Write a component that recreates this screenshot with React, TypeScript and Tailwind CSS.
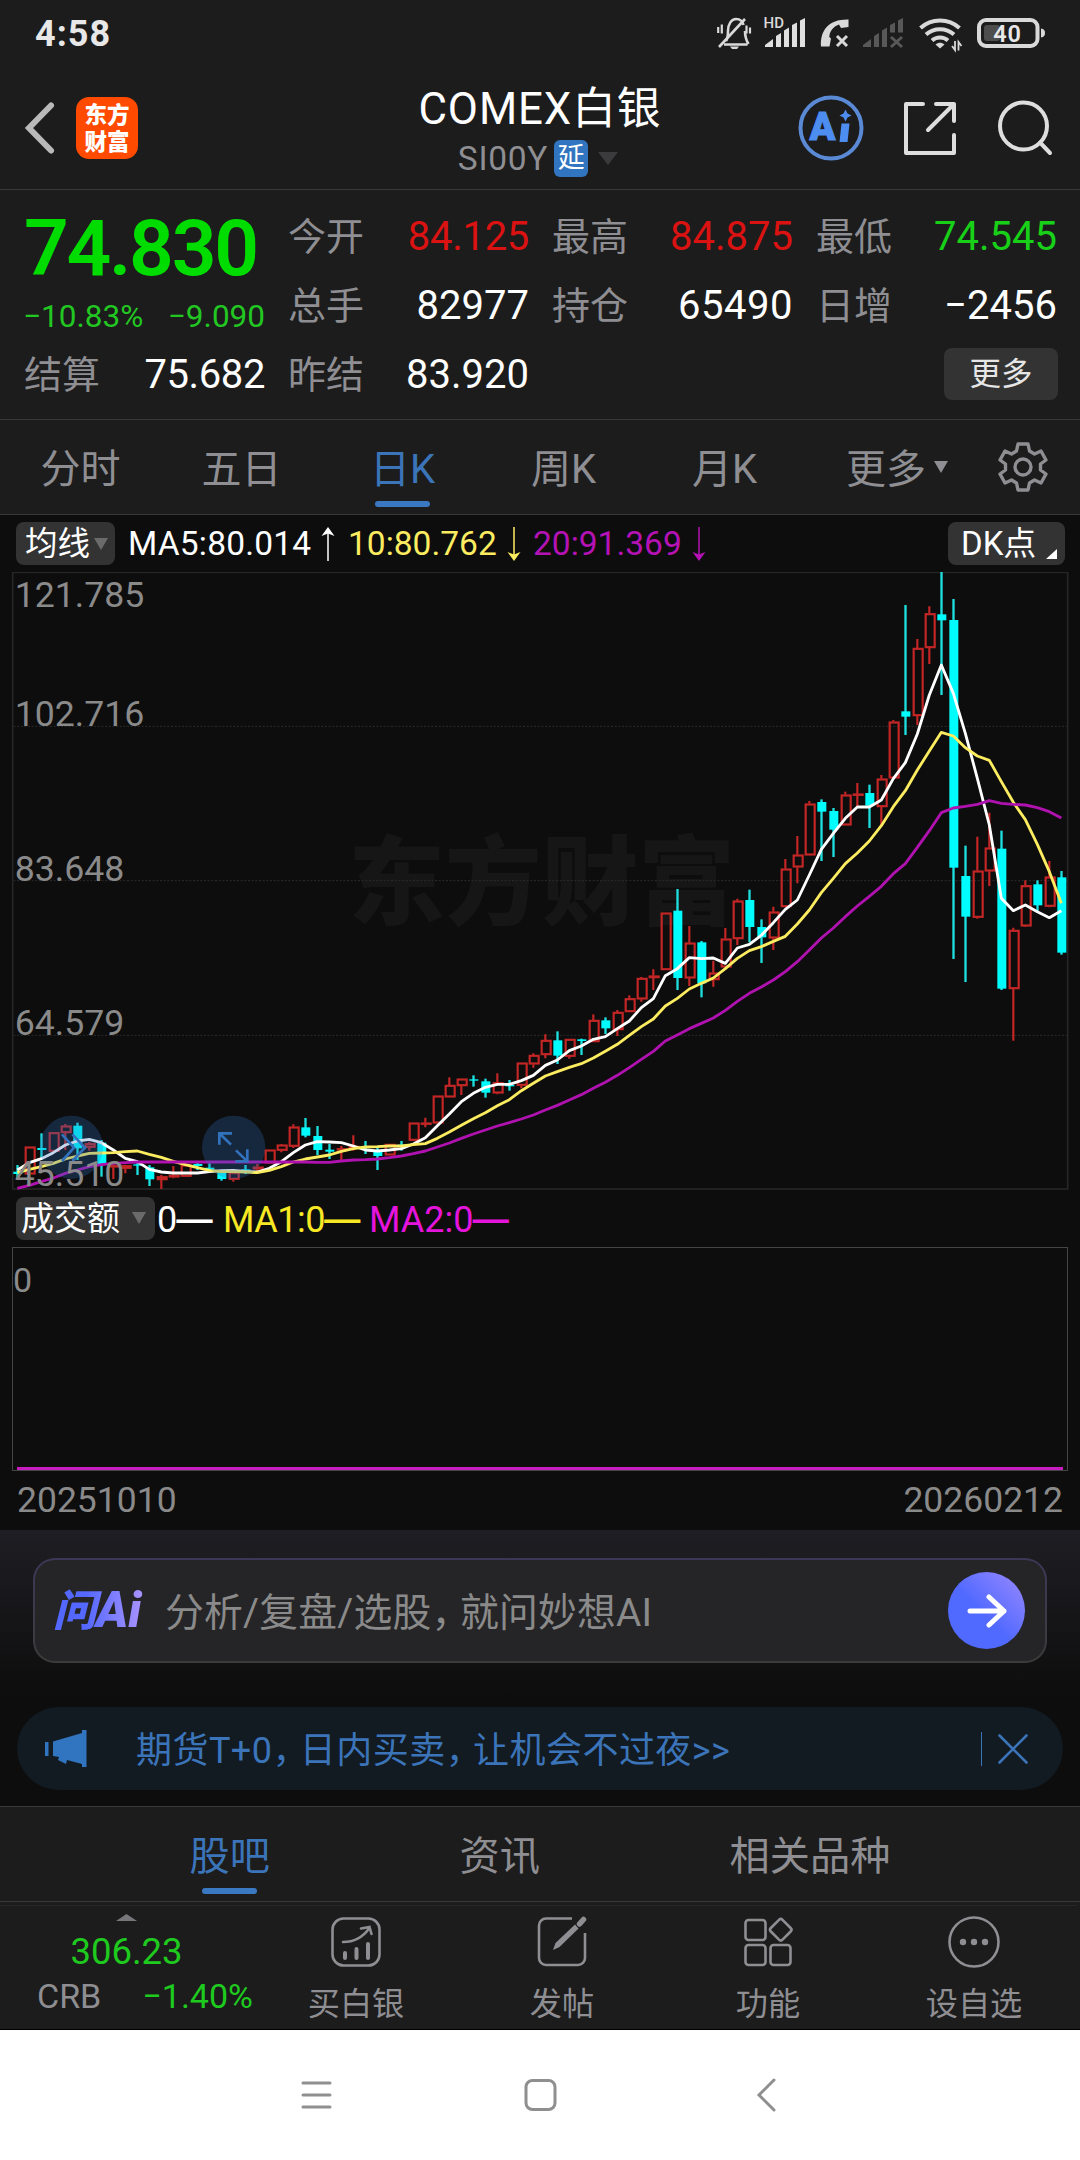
import React, { useState } from "react";

type Candle = [string, number, number, number, number];

// [direction, high, body top, body bottom, low], measured down from the top of the plot
const candles: Candle[] = [
  ["d", 1779, 1799, 1806, 1819],
  ["u", 1724, 1724, 1807, 1807],
  ["d", 1684, 1728, 1734, 1764],
  ["u", 1681, 1681, 1739, 1739],
  ["u", 1656, 1661, 1683, 1734],
  ["d", 1652, 1661, 1729, 1764],
  ["u", 1709, 1714, 1727, 1736],
  ["d", 1704, 1712, 1776, 1814],
  ["u", 1776, 1780, 1786, 1821],
  ["u", 1778, 1780, 1790, 1804],
  ["d", 1769, 1777, 1781, 1809],
  ["d", 1779, 1786, 1822, 1842],
  ["u", 1809, 1813, 1824, 1851],
  ["u", 1782, 1809, 1816, 1819],
  ["u", 1778, 1778, 1814, 1814],
  ["d", 1772, 1776, 1782, 1794],
  ["d", 1774, 1787, 1794, 1799],
  ["d", 1797, 1801, 1821, 1826],
  ["u", 1801, 1801, 1823, 1829],
  ["d", 1779, 1792, 1796, 1806],
  ["u", 1776, 1784, 1792, 1799],
  ["u", 1733, 1733, 1774, 1774],
  ["u", 1716, 1718, 1736, 1741],
  ["u", 1657, 1664, 1724, 1728],
  ["d", 1638, 1666, 1691, 1696],
  ["d", 1662, 1692, 1734, 1749],
  ["d", 1716, 1733, 1739, 1761],
  ["u", 1722, 1729, 1734, 1764],
  ["u", 1690, 1722, 1726, 1736],
  ["d", 1707, 1722, 1727, 1746],
  ["d", 1724, 1734, 1752, 1794],
  ["u", 1716, 1716, 1750, 1750],
  ["d", 1707, 1718, 1724, 1736],
  ["u", 1652, 1652, 1706, 1706],
  ["u", 1637, 1652, 1656, 1666],
  ["u", 1571, 1571, 1654, 1654],
  ["u", 1516, 1539, 1576, 1576],
  ["u", 1520, 1520, 1542, 1569],
  ["d", 1510, 1522, 1526, 1544],
  ["d", 1520, 1528, 1562, 1577],
  ["u", 1504, 1531, 1564, 1567],
  ["d", 1524, 1539, 1543, 1556],
  ["u", 1472, 1472, 1541, 1549],
  ["u", 1444, 1449, 1477, 1487],
  ["u", 1387, 1404, 1449, 1459],
  ["d", 1378, 1405, 1451, 1476],
  ["u", 1401, 1401, 1454, 1460],
  ["d", 1400, 1402, 1407, 1449],
  ["u", 1327, 1344, 1410, 1410],
  ["d", 1336, 1345, 1369, 1386],
  ["u", 1314, 1320, 1374, 1392],
  ["u", 1270, 1279, 1320, 1320],
  ["u", 1215, 1218, 1282, 1289],
  ["u", 1192, 1211, 1218, 1254],
  ["u", 1022, 1022, 1194, 1194],
  ["d", 951, 1016, 1218, 1254],
  ["u", 1062, 1112, 1219, 1242],
  ["d", 1107, 1111, 1234, 1276],
  ["u", 1166, 1202, 1224, 1244],
  ["u", 1068, 1100, 1186, 1186],
  ["u", 980, 986, 1101, 1119],
  ["d", 953, 984, 1065, 1111],
  ["d", 1042, 1065, 1096, 1173],
  ["u", 1004, 1019, 1099, 1134],
  ["u", 861, 890, 1005, 1005],
  ["u", 792, 848, 886, 934],
  ["u", 687, 695, 850, 850],
  ["d", 682, 690, 719, 867],
  ["d", 708, 717, 773, 855],
  ["u", 659, 668, 760, 760],
  ["u", 633, 665, 669, 704],
  ["d", 638, 663, 701, 768],
  ["u", 609, 620, 705, 759],
  ["u", 444, 449, 619, 619],
  ["d", 99, 418, 434, 489],
  ["u", 201, 228, 432, 459],
  ["u", 103, 124, 228, 276],
  ["d", 0, 127, 145, 369],
  ["d", 81, 144, 887, 1161],
  ["d", 821, 912, 1034, 1230],
  ["u", 794, 896, 1037, 1040],
  ["u", 722, 827, 898, 942],
  ["d", 776, 830, 1250, 1254],
  ["u", 1067, 1074, 1251, 1406],
  ["u", 925, 940, 1063, 1065],
  ["d", 925, 937, 1000, 1022],
  ["u", 867, 914, 1004, 1006],
  ["d", 897, 916, 1142, 1148],
];

const ma5 = [
  1794, 1772, 1760, 1742, 1719, 1707, 1702, 1712, 1734, 1759, 1769, 1792, 1800,
  1803, 1803, 1803, 1799, 1796, 1795, 1798, 1800, 1789, 1769, 1742, 1719, 1709,
  1710, 1712, 1722, 1734, 1737, 1734, 1730, 1716, 1697, 1661, 1626, 1589, 1564,
  1546, 1537, 1537, 1526, 1510, 1480, 1464, 1436, 1422, 1402, 1394, 1370, 1347,
  1307, 1280, 1211, 1190, 1157, 1160, 1158, 1174, 1128, 1117, 1090, 1052, 1012,
  984, 909, 832, 784, 739, 705, 705, 684, 620, 572, 486, 369, 279, 364, 484,
  619, 759, 979, 1016, 999, 1019, 1037, 1016,
];

const ma10 = [
  1802, 1792, 1784, 1774, 1761, 1752, 1744, 1743, 1742, 1739, 1737, 1747, 1756,
  1768, 1778, 1787, 1795, 1799, 1799, 1800, 1802, 1795, 1784, 1770, 1761, 1755,
  1749, 1738, 1730, 1725, 1724, 1722, 1722, 1718, 1715, 1699, 1680, 1660, 1640,
  1622, 1601, 1583, 1556, 1534, 1512, 1499, 1486, 1475, 1458, 1438, 1417, 1390,
  1364, 1341, 1302, 1279, 1251, 1234, 1218, 1190, 1159, 1136, 1124, 1108, 1093,
  1056, 1014, 962, 919, 875, 843, 807, 761, 704, 656, 594, 537, 481, 492, 527,
  552, 565, 629, 691, 743, 817, 899, 994,
];

const ma20 = [
  1849, 1840, 1829, 1818, 1804, 1794, 1784, 1778, 1774, 1772, 1770, 1770, 1770,
  1770, 1770, 1770, 1770, 1770, 1770, 1770, 1770, 1770, 1770, 1770, 1770, 1771,
  1771, 1767, 1764, 1763, 1761, 1757, 1752, 1745, 1737, 1725, 1713, 1699, 1686,
  1674, 1662, 1652, 1641, 1629, 1614, 1600, 1584, 1568, 1549, 1531, 1510, 1487,
  1462, 1438, 1407, 1389, 1370, 1354, 1338, 1315, 1288, 1264, 1245, 1224, 1199,
  1169, 1134, 1098, 1068, 1034, 1002, 973, 943, 905, 875, 826, 776, 722, 708,
  703, 697, 686, 694, 697, 699, 707, 719, 738,
];

const xAt = (i: number) => 52 + i * 36;
const toPoints = (values: number[]) =>
  values.map((y, i) => `${xAt(i)},${y}`).join(" ");

const StatusBar = () => (
  <div className="flex h-[68px] items-start justify-between pl-[35px] pr-[34px]">
    <span className="mt-[16px] text-[36px] leading-none font-bold tracking-[1px] text-[#e8e8e8]">
      4:58
    </span>
    <svg width="330" height="40" viewBox="716 14 330 40" className="mt-3.5">
      {/* muted bell */}
      <g fill="none" stroke="#d9d9d9" strokeWidth="2.6">
        <path d="M724 44.5h23.5M726 41c2-3 2-6 2-10 0-7 3.500-12 8-12s7 3 7.500 6M745 31c0 6 1 9 3.500 13" />
        <path d="M719 47l26-28" />
        <path d="M718.200 27v6M721.800 24.500v9M746.500 25.500v8M750 27.500v6" strokeWidth="2.200" />
      </g>
      <path d="M730 46.500h9l-2 2.500h-5z" fill="#d9d9d9" />
      <text x="763.500" y="28" fontSize="15" fontWeight="500" fill="#d9d9d9" fontFamily="Roboto">
        HD
      </text>
      <g fill="#e0e0e0">
        <path d="M765 47v-2l8-6v8zM776 47V36l5-3v14zM784 47V30.500l5-3V47zM792 47V25l5-2.500V47zM800 47V20.500l5-2.500v29z" />
      </g>
      {/* call forwarding */}
      <path d="M821 46.500C820 30 829 19 848.500 19.500V27l-7.500 1-2-3.500c-6 2-9.500 7-9.700 12.500l1.700 1.500-1.500 8z" fill="#d9d9d9" />
      <path d="M837 36l10 10M847 36l-10 10" stroke="#d9d9d9" strokeWidth="3" />
      <g fill="#585858">
        <path d="M863 47v-2l8-6v8zM874 47V36l5-3v14zM882 47V30.500l5-3V47zM890 32.500V25l5-2.500v10zM898 32.500V20.500l5-2.500v14.500z" />
        <path d="M891 37l11 10M902 37l-11 10" stroke="#585858" strokeWidth="3" />
      </g>
      {/* wifi */}
      <g fill="none" stroke="#d9d9d9" strokeWidth="4">
        <path d="M920.500 28c11-10 28-10 39 0" />
        <path d="M926 34.500c8-7 20-7 28 0" />
        <path d="M932 40.500c4.500-4 11.500-4 16 0" />
      </g>
      <path d="M935.500 44.500c3-2.300 6-2.300 9 0l-4.500 4z" fill="#d9d9d9" />
      <path d="M955 41v9l-3-4M958.500 50.500V42l3 4" fill="none" stroke="#d9d9d9" strokeWidth="1.800" />
      {/* battery */}
      <rect x="979" y="20" width="58.500" height="26" rx="7" fill="none" stroke="#d9d9d9" strokeWidth="4" />
      <rect x="984" y="25" width="16" height="16" rx="3" fill="#4d4d4d" />
      <path d="M1041 28.500c3 .5 4 2 4 4.500s-1 4-4 4.500z" fill="#d9d9d9" />
      <text x="1007.500" y="41.500" fontSize="23.500" fontWeight="600" letterSpacing="0.800" fill="#e8e8e8" textAnchor="middle" fontFamily="Roboto">
        40
      </text>
    </svg>
  </div>
);

const Header = () => (
  <header className="flex h-[122px] border-b border-[#38383a]">
    <div className="flex w-[300px] items-start pl-6 pt-[29px]">
      <svg width="32" height="62" viewBox="0 0 32 62" fill="none">
        <path d="M27 8.500L5 31l22 22.500" stroke="#b9b9b9" strokeWidth="6" strokeLinecap="round" />
      </svg>
      <div className="ml-5 flex h-[62px] w-[62px] flex-col items-center justify-center rounded-[13px] bg-[#ff4a00] pt-px text-[22.500px] leading-[27px] font-black text-white">
        <span>东方</span>
        <span>财富</span>
      </div>
    </div>
    <div className="flex w-[480px] flex-col items-center">
      <h1 className="mt-[15px] text-[43.800px] leading-[52px] tracking-[0.900px] whitespace-nowrap text-white">
        COMEX白银
      </h1>
      <div className="mt-[5px] flex h-[37px] items-center">
        <span className="-ml-1 pt-px text-[33.500px] leading-none tracking-[0.700px] text-[#8e8e93]">
          SI00Y
        </span>
        <span className="ml-[6px] flex h-[37px] w-[34px] items-center justify-center rounded-md bg-[#3174bf] text-[27px] leading-none text-white">
          延
        </span>
        <svg width="20" height="13" viewBox="0 0 20 13" className="ml-2.5">
          <path d="M0 0h20L10 13z" fill="#3b3b3d" />
        </svg>
      </div>
    </div>
    <div className="flex w-[300px] items-start pl-[17px] pt-[26px]">
      <svg width="68" height="68" viewBox="0 0 68 68">
        <circle cx="34" cy="34" r="30.500" fill="none" stroke="#5a8ad6" strokeWidth="4" />
        <text x="12.500" y="46" fontSize="38" fontWeight="900" fill="#4d8df0" stroke="#4d8df0" strokeWidth="1" fontFamily="Roboto">
          A
        </text>
        <path d="M44.500 29.500h8l-2 18.500h-8z" fill="#4d8df0" />
        <path d="M48.500 15.500l2 4 4 2-4 2-2 4-2-4-4-2 4-2z" fill="#4d8df0" />
      </svg>
      <svg width="56" height="56" viewBox="0 0 56 56" fill="none" className="ml-[37px] mt-1.5" stroke="#dedede" strokeWidth="4" strokeLinecap="round" strokeLinejoin="round">
        <path d="M21 4H4v49h48V35M34 4h18v17M52 4L26 30" />
      </svg>
      <svg width="58" height="58" viewBox="0 0 58 58" fill="none" className="ml-[39px] mt-1.5" stroke="#dedede" strokeWidth="4" strokeLinecap="round">
        <circle cx="26.500" cy="26" r="23.500" />
        <path d="M43 42.500L53 53" />
      </svg>
    </div>
  </header>
);

const QuoteCell = ({
  label,
  value,
  color,
}: {
  label: string;
  value: string;
  color: string;
}) => (
  <div className="-mr-px flex h-[69px] items-center justify-between pt-px leading-none">
    <span className="text-[38px]">{label}</span>
    <span className={`text-[40px] ${color}`}>{value}</span>
  </div>
);

const Quote = () => (
  <section className="h-[230px] border-b border-[#38383a] px-6 pt-3 text-[#8e8e93]">
    <div className="grid grid-cols-4 gap-x-6">
      <div className="row-span-2 flex flex-col">
        <span className="mt-[6px] text-[78.500px] leading-[80px] font-semibold tracking-[-2.300px] text-[#00dc00]">
          74.830
        </span>
        <div className="-mx-px mt-3 flex justify-between text-[31.500px] leading-[34px] text-[#22c722]">
          <span>−10.83%</span>
          <span>−9.090</span>
        </div>
      </div>
      <QuoteCell label="今开" value="84.125" color="text-[#db1212] tracking-[-0.300px]" />
      <QuoteCell label="最高" value="84.875" color="text-[#db1212]" />
      <QuoteCell label="最低" value="74.545" color="text-[#18d018]" />
      <QuoteCell label="总手" value="82977" color="text-white" />
      <QuoteCell label="持仓" value="65490" color="text-white tracking-[0.500px]" />
      <QuoteCell label="日增" value="−2456" color="text-white" />
      <QuoteCell label="结算" value="75.682" color="text-white tracking-[-0.400px]" />
      <QuoteCell label="昨结" value="83.920" color="text-white" />
      <div />
      <div className="flex items-center justify-end">
        <button className="-mt-0.5 -mr-0.5 h-[52px] w-[114px] rounded-lg bg-[#333333] pt-0.5 text-[31.500px] leading-none text-[#e6e6e6]">
          更多
        </button>
      </div>
    </div>
  </section>
);

const periods = ["分时", "五日", "日K", "周K", "月K"];

const PeriodTabs = () => {
  const [active, setActive] = useState("日K");

  return (
    <nav className="flex h-[95px] border-b border-[#38383a] text-[40px] leading-none text-[#8e8e93]">
      {periods.map((period) => (
        <button
          key={period}
          onClick={() => setActive(period)}
          className={`relative w-[161px] pt-1.5 ${active === period ? "text-[#3b74b8]" : ""}`}
        >
          {period}
          {active === period && (
            <span className="absolute bottom-[7px] left-[53px] h-1.5 w-[55px] rounded-full bg-[#3b78c2]" />
          )}
        </button>
      ))}
      <button className="flex w-[161px] items-center pt-1.5 pl-[41px]">
        更多
        <svg width="14" height="12" viewBox="0 0 14 12" className="mb-1.5 ml-2">
          <path d="M0 0h14L7 12z" fill="#8e8e93" />
        </svg>
      </button>
      <div className="flex flex-1 items-center justify-center">
        <svg width="50" height="52" viewBox="0 0 50 52" fill="none" stroke="#8e8e93" strokeWidth="3.400" strokeLinejoin="round">
          <path d="M20 3h10l1.500 7 5 3 6.500-3 5 9-5.500 4v6l5.500 4-5 9-6.500-3-5 3-1.500 7H20l-1.500-7-5-3L7 42l-5-9 5.500-4v-6L2 19l5-9 6.500 3 5-3z" />
          <circle cx="25" cy="26" r="8" />
        </svg>
      </div>
    </nav>
  );
};

const MaBar = () => (
  <div className="flex h-[57px] items-center pl-4 pr-[15px] text-[33.500px] leading-none text-white">
    <button className="flex h-[43px] w-[99px] items-center rounded-lg bg-[#333333] pt-px pl-[9px] text-[32.500px]">
      均线
      <svg width="14" height="12" viewBox="0 0 14 12" className="ml-1">
        <path d="M0 0h14L7 12z" fill="#6b6b6b" />
      </svg>
    </button>
    <span className="ml-[13px] w-[193px] tracking-[0.200px]">MA5:80.014</span>
    <Arrow color="#ffffff" up />
    <span className="ml-[13px] w-[151px] text-[#fcec60]">10:80.762</span>
    <span className="w-2" />
    <Arrow color="#fcec60" />
    <span className="ml-3 w-[151px] text-[#b512b5]">20:91.369</span>
    <span className="w-2" />
    <Arrow color="#b512b5" />
    <button className="ml-auto flex h-[43px] w-[117px] items-center rounded-lg bg-[#333333] pl-[13px] text-[33px]">
      DK点
      <svg width="11" height="10" viewBox="0 0 11 10" className="ml-2.5 mt-5">
        <path d="M11 0v10H0z" fill="#fff" />
      </svg>
    </button>
  </div>
);

const Arrow = ({ color, up }: { color: string; up?: boolean }) => (
  <svg width="14" height="34" viewBox="0 0 14 34" className={up ? "" : "rotate-180"}>
    <path d="M7 2v32" stroke={color} strokeWidth="1.500" />
    <path d="M7 0l6.500 9L7 6.500.500 9z" fill={color} />
  </svg>
);

const KLineChart = () => (
  <div className="h-[617px]">
    <svg width="1080" height="619" viewBox="0 0 3240 1857">
      <rect x="38" y="1" width="3165" height="1850" fill="none" stroke="#262626" strokeWidth="5" />
      <text x="1625" y="1034" fontSize="290" fontWeight="900" fill="#161616" textAnchor="middle" fontFamily="Noto Sans CJK SC">
        东方财富
      </text>
      {[463, 926, 1390].map((y) => (
        <line key={y} x1="40" x2="3202" y1={y} y2={y} stroke="#2c2c2c" strokeWidth="3" strokeDasharray="6 5" />
      ))}
      {candles.map(([dir, high, top, bottom, low], i) => {
        const x = xAt(i);
        if (dir === "u") {
          return (
            <g key={i} stroke="#c42626" strokeWidth="6.500" fill="none">
              <path d={`M${x} ${high}V${top}M${x} ${bottom}V${low}`} />
              <rect x={x - 11} y={top + 2.5} width="27" height={Math.max(bottom - top - 5, 1)} />
            </g>
          );
        }
        return (
          <g key={i} fill="#00fcfc">
            <rect x={x - 3} y={high} width="7" height={low - high} fill="#1fdede" />
            <rect x={x - 12} y={top} width="27" height={bottom - top} />
          </g>
        );
      })}
      <g fill="none" strokeWidth="8.500" strokeLinejoin="round">
        <polyline points={toPoints(ma5)} stroke="#ffffff" />
        <polyline points={toPoints(ma10)} stroke="#fcec60" />
        <polyline points={toPoints(ma20)} stroke="#b012b0" />
      </g>
      <g fill="#2f6fc0">
        <circle cx="214" cy="1726" r="95" fillOpacity="0.28" />
        <circle cx="701" cy="1726" r="95" fillOpacity="0.28" />
      </g>
      <g fill="none" stroke="#3272bd" strokeWidth="8">
        <path d="M186 1687l36 40-36 40M217 1687l38 40-38 40" />
        <path d="M658 1718v-34h38M660 1686l33 32M742 1732v36h-36M708 1735l34 33" />
      </g>
      <g fill="#8a8a8a" fontSize="107" fontFamily="Roboto">
        <text x="44" y="104">121.785</text>
        <text x="44" y="462">102.716</text>
        <text x="44" y="927">83.648</text>
        <text x="44" y="1388">64.579</text>
        <text x="44" y="1842">45.510</text>
      </g>
    </svg>
  </div>
);

const VolumeChart = () => (
  <section>
    <div className="flex h-[58px] items-center pl-4 text-[36px] leading-none">
      <button className="flex h-[43px] w-[139px] items-center rounded-lg bg-[#333333] pl-[5px] text-[33px] text-white">
        成交额
        <svg width="14" height="12" viewBox="0 0 14 12" className="ml-3">
          <path d="M0 0h14L7 12z" fill="#6b6b6b" />
        </svg>
      </button>
      <span className="ml-[2px] flex w-[66px] items-center pt-1 text-white">
        0<Dash />
      </span>
      <span className="flex w-[146px] items-center pt-1 tracking-[-0.500px] text-[#f8e824]">
        MA1:0
        <Dash />
      </span>
      <span className="flex items-center pt-1 text-[#e414dc]">
        MA2:0
        <Dash />
      </span>
    </div>
    <div className="mx-[12px] flex h-[224px] flex-col justify-between border border-[#454545]">
      <span className="mt-[15px] text-[34px] leading-none text-[#8a8a8a]">0</span>
      <div className="mx-1 h-[3px] bg-[#c81ec0]" />
    </div>
    <div className="flex h-[59px] justify-between px-[17px] pt-3 text-[35.500px] leading-none text-[#8a8a8a]">
      <span>20251010</span>
      <span>20260212</span>
    </div>
  </section>
);

const Dash = () => (
  <span className="-mt-3 -ml-[3px] font-['Noto_Sans_CJK_SC',sans-serif] text-[45px] leading-none font-medium">
    —
  </span>
);

// full-width comma with its trailing space trimmed
const Comma = () => (
  <span className="mr-[9px] [font-feature-settings:'halt']">，</span>
);

const AskAi = () => (
  <section className="h-[177px] bg-linear-to-b from-[#1f1e24] to-[#0d0d0d] to-95% px-[33px] pt-7">
    <div className="rounded-[22px] bg-linear-to-b from-[#3b3858] to-[#3e3b3b] p-0.5">
      <div className="flex h-[101px] items-center rounded-[20px] bg-[#252527] pl-[17px] pr-5">
        <div className="flex w-[113px] items-center bg-linear-to-r from-[#5468ff] from-30% to-[#a892ff] to-80% bg-clip-text pl-px text-[43px] leading-[56px] font-black whitespace-nowrap text-transparent italic">
          问<span className="text-[49px]">Ai</span>
        </div>
        <p className="flex-1 pt-1.5 text-[38.800px] leading-none tracking-[0.200px] whitespace-nowrap text-[#8a8a8a]">
          分析/复盘/选股
          <Comma />
          就问妙想AI
        </p>
        <button className="flex h-[77px] w-[77px] items-center justify-center rounded-full bg-linear-to-tr from-[#5069ff] from-45% to-[#9a88ff]">
          <svg width="40" height="36" viewBox="0 0 40 36" fill="none" stroke="#fff" strokeWidth="5" strokeLinecap="round" strokeLinejoin="round">
            <path d="M3 18h34M22 4l15 14-15 14" />
          </svg>
        </button>
      </div>
    </div>
  </section>
);

const Banner = () => (
  <section className="h-[99px] px-[17px]">
    <div className="flex h-[83px] items-center rounded-full bg-[#121a22] text-[#3b74b8]">
      <svg width="42" height="37" viewBox="0 0 42 37" className="ml-7" fill="#3174bf">
        <path d="M0 12h3.500v14H0zM8 11.500L37 3V0h4.500v37H37v-3l-15-4-1 4-8-4 1-3-6-1z" />
      </svg>
      <p className="ml-[49px] pt-1 text-[36px] leading-none tracking-[0.450px] whitespace-nowrap">
        期货T+0
        <Comma />
        日内买卖
        <Comma />
        让机会不过夜&gt;&gt;
      </p>
      <span className="ml-auto h-[34px] w-px bg-[#3b74b8]" />
      <svg width="30" height="30" viewBox="0 0 30 30" className="ml-4 mr-[35px]" stroke="#3b74b8" strokeWidth="2.600" strokeLinecap="round">
        <path d="M1.500 1.500l27 27M28.500 1.500l-27 27" />
      </svg>
    </div>
  </section>
);

const ContentTabs = () => (
  <nav className="flex h-[96px] justify-evenly border-y border-[#38383a] text-[40.200px] leading-none text-[#8e8e93]">
    <button className="relative pt-1.5 text-[#3b74b8]">
      股吧
      <span className="absolute bottom-[7px] left-[12px] h-1.5 w-[55px] rounded-full bg-[#3b78c2]" />
    </button>
    <button className="pt-1.5">资讯</button>
    <button className="pt-1.5">相关品种</button>
  </nav>
);

const actions = [
  {
    label: "买白银",
    icon: (
      <>
        <rect x="2.500" y="2.500" width="47" height="47" rx="11" />
        <path d="M13 26c12 0 20-5 26-13.500M31 12.500l8.500-1.500 2 7" strokeLinecap="round" />
        <path d="M15 37v5M26.500 33v9M38 28v14" strokeWidth="4" strokeLinecap="round" />
      </>
    ),
  },
  {
    label: "发帖",
    icon: (
      <>
        <path d="M36 2.500H10a7 7 0 0 0-7 7V42a7 7 0 0 0 7 7h32a7 7 0 0 0 7-7V17" />
        <path d="M17 34l2.500-7L39 8.500l3.500 4L23.500 31z" fill="#8e8e93" stroke="none" />
        <path d="M43.500 8l4-4.500" strokeWidth="5.500" strokeLinecap="round" />
      </>
    ),
  },
  {
    label: "功能",
    icon: (
      <>
        <rect x="3.500" y="4" width="20" height="20" rx="3" />
        <rect x="3.500" y="29" width="20" height="20" rx="3" />
        <rect x="28.500" y="29" width="20" height="20" rx="3" />
        <rect x="30.500" y="5.500" width="16.500" height="16.500" rx="2.500" transform="rotate(45 38.750 13.750)" />
      </>
    ),
  },
  {
    label: "设自选",
    icon: (
      <>
        <circle cx="26" cy="26" r="24.500" />
        <g fill="#8e8e93" stroke="none">
          <circle cx="15" cy="26" r="3.200" />
          <circle cx="26" cy="26" r="3.200" />
          <circle cx="37" cy="26" r="3.200" />
        </g>
      </>
    ),
  },
];

const BottomBar = () => (
  <footer className="flex h-[128px] border-b border-black bg-[#1c1c1c] pt-[3px] text-[#8e8e93]">
    <div className="flex w-[253px] flex-col items-center border-t border-[#272727] leading-none">
      <svg width="21" height="7" viewBox="0 0 21 7" className="mt-2">
        <path d="M0 7L10.500 0 21 7z" fill="#77777b" />
      </svg>
      <span className="mt-[13px] text-[36.500px] text-[#1fca1f]">306.23</span>
      <div className="mt-2 flex w-full justify-between pl-[37px] text-[34px]">
        <span>CRB</span>
        <span className="text-[#1fca1f]">−1.40%</span>
      </div>
    </div>
    {actions.map((action) => (
      <button
        key={action.label}
        className="flex w-[206px] flex-col items-center border-t border-[#272727] text-[32.200px] leading-none"
      >
        <svg width="52" height="52" viewBox="0 0 52 52" fill="none" stroke="#8e8e93" strokeWidth="2.600" className="mt-[10px]">
          {action.icon}
        </svg>
        <span className="mt-5">{action.label}</span>
      </button>
    ))}
  </footer>
);

const SystemNav = () => (
  <div className="flex h-[130px] items-center justify-center gap-[190px] bg-white">
    <svg width="36" height="34" viewBox="0 0 36 34" stroke="#8f8f8f" strokeWidth="3" strokeLinecap="round">
      <path d="M7 5h27M7 17h27M7 29h27" />
    </svg>
    <svg width="36" height="34" viewBox="0 0 36 34" fill="none" stroke="#8f8f8f" strokeWidth="3">
      <rect x="4" y="2.500" width="29" height="29" rx="6.500" />
    </svg>
    <svg width="36" height="34" viewBox="0 0 36 34" fill="none" stroke="#8f8f8f" strokeWidth="3" strokeLinecap="round">
      <path d="M26 2L11 17l15 15" />
    </svg>
  </div>
);

const App: React.FC = () => {
  return (
    <main className="flex h-[2160px] w-[1080px] flex-col overflow-hidden bg-[#1c1c1c] font-['Roboto','Noto_Sans_CJK_SC',sans-serif]">
      <StatusBar />
      <Header />
      <Quote />
      <PeriodTabs />
      <div className="bg-[#0d0d0d]">
        <MaBar />
        <KLineChart />
        <VolumeChart />
        <AskAi />
        <Banner />
      </div>
      <ContentTabs />
      <BottomBar />
      <SystemNav />
    </main>
  );
};

export default App;
